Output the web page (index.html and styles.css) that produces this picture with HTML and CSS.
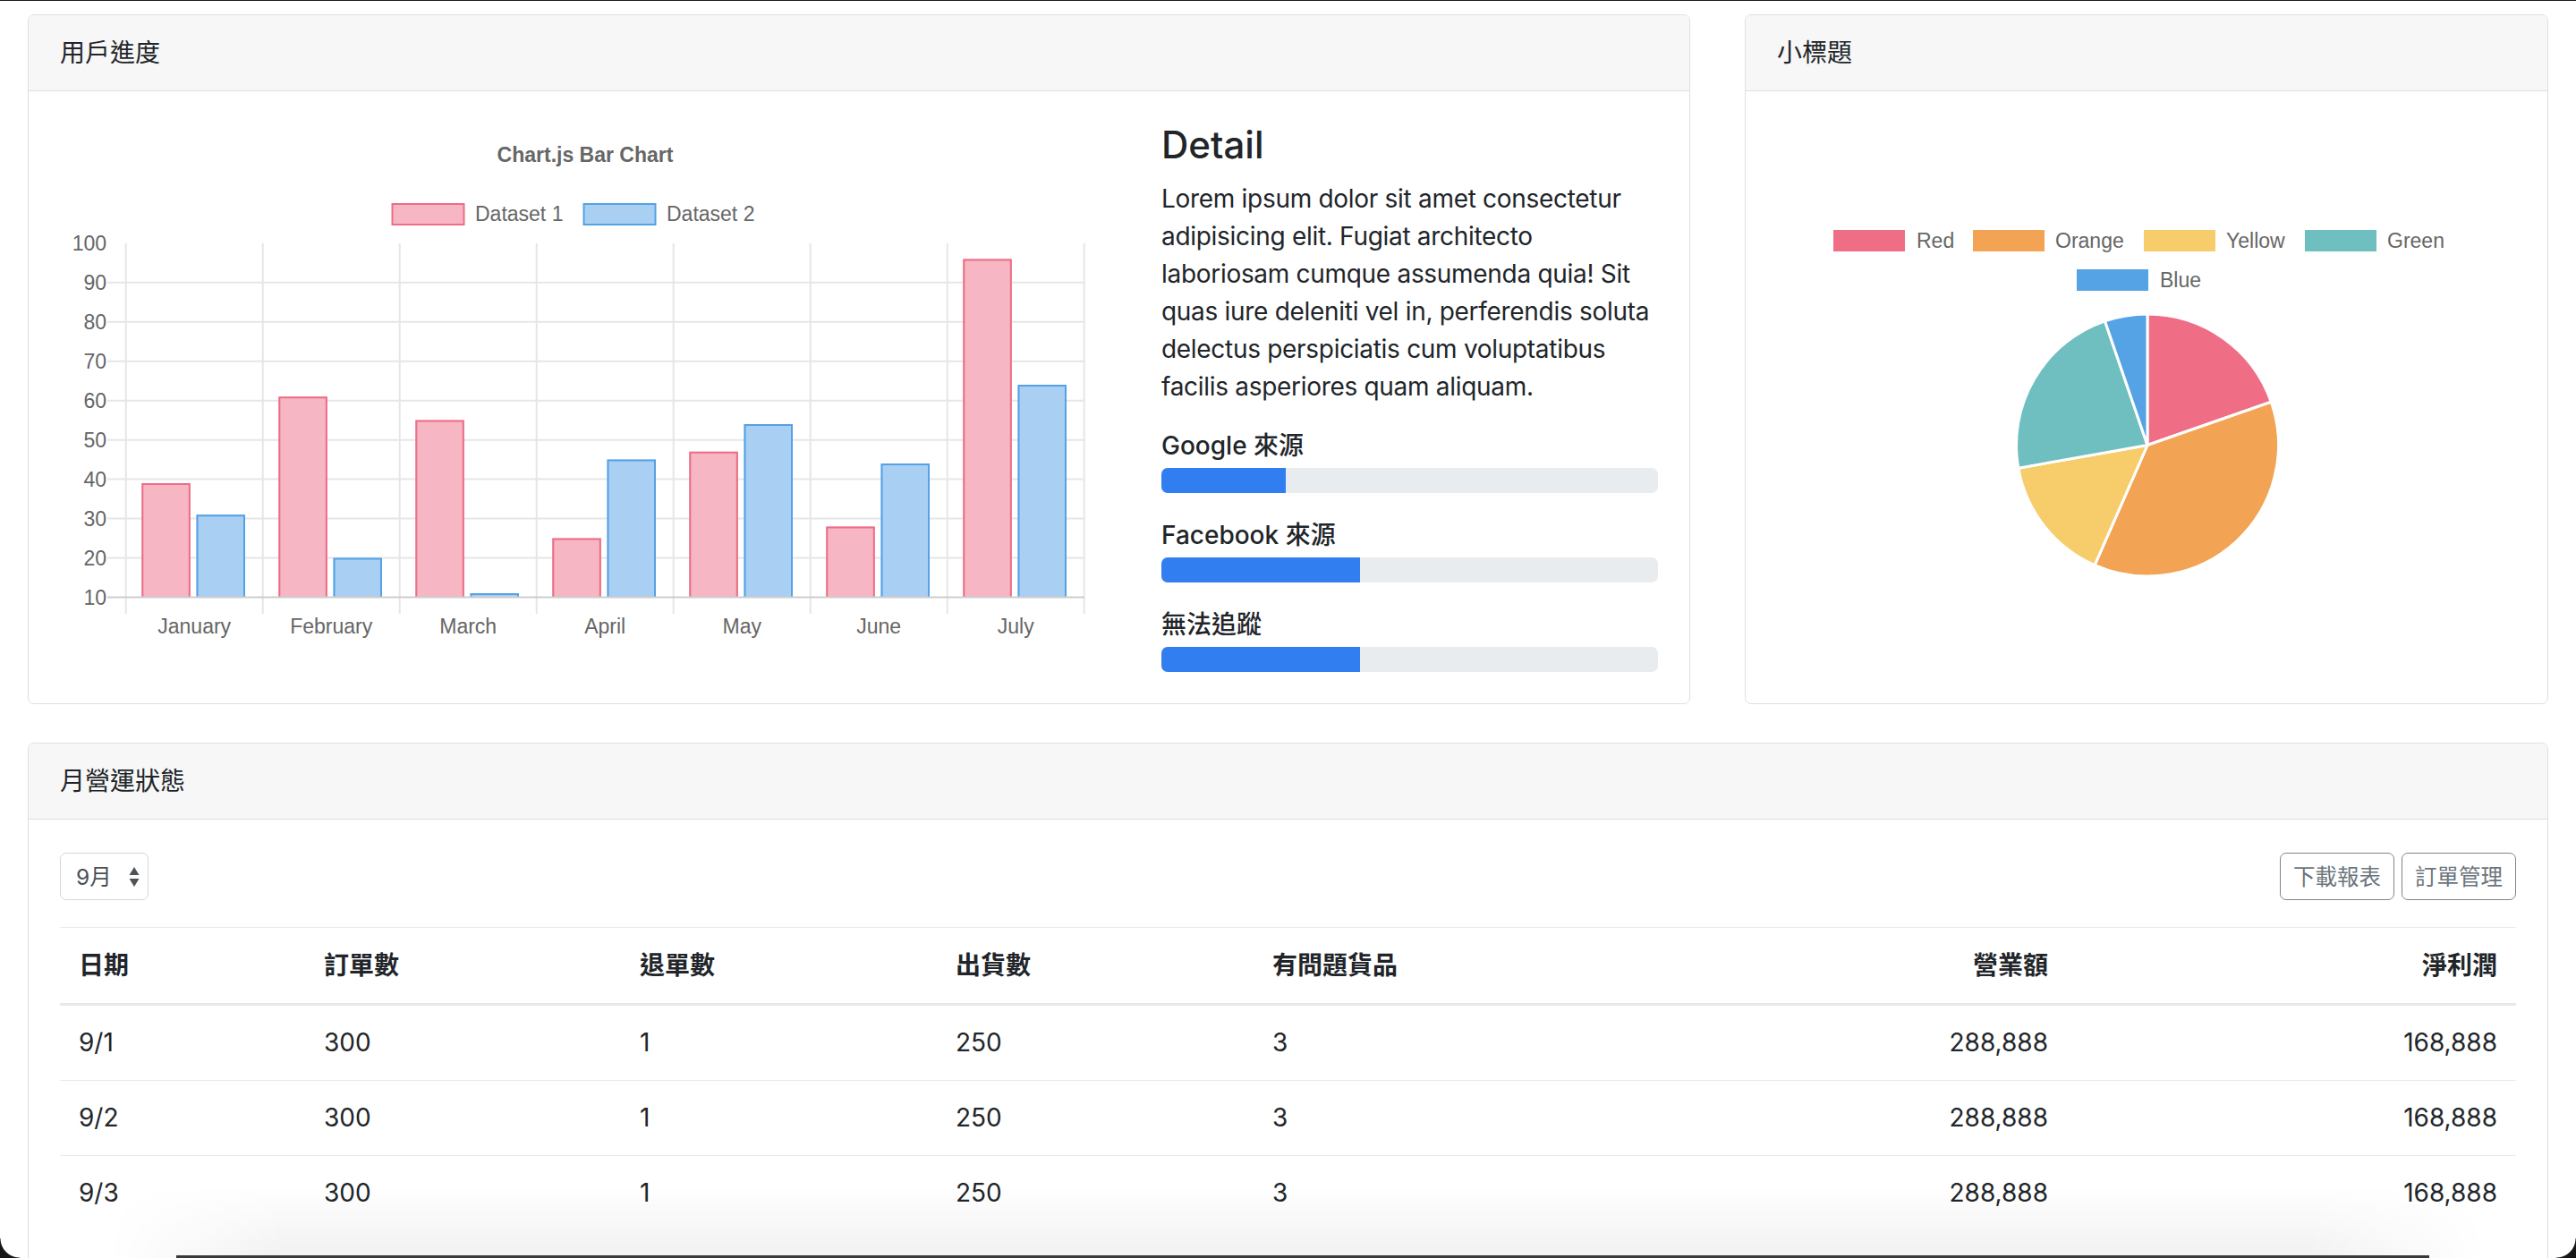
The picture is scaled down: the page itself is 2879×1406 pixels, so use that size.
FILE: index.html
```html
<!DOCTYPE html>
<html lang="zh-Hant">
<head>
<meta charset="utf-8">
<title>Dashboard</title>
<link rel="stylesheet" href="styles.css">
</head>
<body>
<div class="page">
  <div class="row-top">
    <section class="card">
      <div class="card-header">用戶進度</div>
      <div class="card-body body-split">
        <svg class="bar-chart" width="1180" height="614" viewBox="67 137 1180 614" xmlns="http://www.w3.org/2000/svg">
          <text class="chart-title" x="654" y="181" text-anchor="middle">Chart.js Bar Chart</text>
          <rect x="438.5" y="228" width="80" height="23" fill="#f7b6c3" stroke="#ec6d87" stroke-width="2"/>
          <text class="chart-text" x="531" y="247">Dataset 1</text>
          <rect x="652.5" y="228" width="80" height="23" fill="#a9cff3" stroke="#55a1e5" stroke-width="2"/>
          <text class="chart-text" x="745" y="247">Dataset 2</text>
          <g class="grid">
            <line x1="120" y1="315.8" x2="1212" y2="315.8"/>
            <line x1="120" y1="359.7" x2="1212" y2="359.7"/>
            <line x1="120" y1="403.7" x2="1212" y2="403.7"/>
            <line x1="120" y1="447.7" x2="1212" y2="447.7"/>
            <line x1="120" y1="491.7" x2="1212" y2="491.7"/>
            <line x1="120" y1="535.6" x2="1212" y2="535.6"/>
            <line x1="120" y1="579.6" x2="1212" y2="579.6"/>
            <line x1="120" y1="623.6" x2="1212" y2="623.6"/>
            <line x1="140.7" y1="272" x2="140.7" y2="686"/>
            <line x1="293.7" y1="272" x2="293.7" y2="686"/>
            <line x1="446.7" y1="272" x2="446.7" y2="686"/>
            <line x1="599.7" y1="272" x2="599.7" y2="686"/>
            <line x1="752.7" y1="272" x2="752.7" y2="686"/>
            <line x1="905.7" y1="272" x2="905.7" y2="686"/>
            <line x1="1058.7" y1="272" x2="1058.7" y2="686"/>
            <line x1="1211.7" y1="272" x2="1211.7" y2="686"/>
          </g>
          <g class="y-labels" text-anchor="end">
            <text x="119" y="280">100</text>
            <text x="119" y="324">90</text>
            <text x="119" y="368">80</text>
            <text x="119" y="412">70</text>
            <text x="119" y="456">60</text>
            <text x="119" y="500">50</text>
            <text x="119" y="544">40</text>
            <text x="119" y="588">30</text>
            <text x="119" y="632">20</text>
            <text x="119" y="676">10</text>
          </g>
          <g class="bars-a">
            <rect x="158.3" y="540.0" width="54.5" height="127.5"/>
            <rect x="311.3" y="443.3" width="54.5" height="224.2"/>
            <rect x="464.3" y="469.6" width="54.5" height="197.9"/>
            <rect x="617.3" y="601.5" width="54.5" height="66.0"/>
            <rect x="770.3" y="504.8" width="54.5" height="162.7"/>
            <rect x="923.3" y="588.4" width="54.5" height="79.1"/>
            <rect x="1076.3" y="289.4" width="54.5" height="378.1"/>
          </g>
          <g class="bars-a-line">
            <path d="M159.3 667.5V541H211.8V667.5"/>
            <path d="M312.3 667.5V444.3H364.8V667.5"/>
            <path d="M465.3 667.5V470.6H517.8V667.5"/>
            <path d="M618.3 667.5V602.5H670.8V667.5"/>
            <path d="M771.3 667.5V505.8H823.8V667.5"/>
            <path d="M924.3 667.5V589.4H976.8V667.5"/>
            <path d="M1077.3 667.5V290.4H1129.8V667.5"/>
          </g>
          <g class="bars-b">
            <rect x="219.5" y="575.2" width="54.5" height="92.3"/>
            <rect x="372.5" y="623.5" width="54.5" height="44.0"/>
            <rect x="525.5" y="663.1" width="54.5" height="4.4"/>
            <rect x="678.5" y="513.6" width="54.5" height="153.9"/>
            <rect x="831.5" y="474.0" width="54.5" height="193.5"/>
            <rect x="984.5" y="518.0" width="54.5" height="149.5"/>
            <rect x="1137.5" y="430.1" width="54.5" height="237.4"/>
          </g>
          <g class="bars-b-line">
            <path d="M220.5 667.5V576.2H273V667.5"/>
            <path d="M373.5 667.5V624.5H426V667.5"/>
            <path d="M526.5 667.5V664.1H579V667.5"/>
            <path d="M679.5 667.5V514.6H732V667.5"/>
            <path d="M832.5 667.5V475H885V667.5"/>
            <path d="M985.5 667.5V519H1038V667.5"/>
            <path d="M1138.5 667.5V431.1H1191V667.5"/>
          </g>
          <line class="axis" x1="120" y1="667.5" x2="1212" y2="667.5"/>
          <g class="x-labels" text-anchor="middle">
            <text x="217.2" y="708">January</text>
            <text x="370.2" y="708">February</text>
            <text x="523.2" y="708">March</text>
            <text x="676.2" y="708">April</text>
            <text x="829.2" y="708">May</text>
            <text x="982.2" y="708">June</text>
            <text x="1135.2" y="708">July</text>
          </g>
        </svg>
        <div class="detail">
          <h4 class="detail-title">Detail</h4>
          <p class="detail-text">Lorem ipsum dolor sit amet consectetur adipisicing elit. Fugiat architecto laboriosam cumque assumenda quia! Sit quas iure deleniti vel in, perferendis soluta delectus perspiciatis cum voluptatibus facilis asperiores quam aliquam.</p>
          <div class="source">
            <div class="source-label">Google 來源</div>
            <div class="progress"><div class="progress-fill" style="width:25%"></div></div>
          </div>
          <div class="source">
            <div class="source-label">Facebook 來源</div>
            <div class="progress"><div class="progress-fill" style="width:40%"></div></div>
          </div>
          <div class="source">
            <div class="source-label">無法追蹤</div>
            <div class="progress"><div class="progress-fill" style="width:40%"></div></div>
          </div>
        </div>
      </div>
    </section>
    <section class="card">
      <div class="card-header">小標題</div>
      <div class="card-body">
        <svg class="pie-chart" width="825" height="614" viewBox="1987 137 825 614" xmlns="http://www.w3.org/2000/svg">
          <rect x="2050" y="257" width="80" height="24" fill="#ef6e85"/>
          <text class="chart-text" x="2143" y="277">Red</text>
          <rect x="2206" y="257" width="80" height="24" fill="#f2a354"/>
          <text class="chart-text" x="2298" y="277">Orange</text>
          <rect x="2397" y="257" width="80" height="24" fill="#f7cd6b"/>
          <text class="chart-text" x="2489" y="277">Yellow</text>
          <rect x="2577" y="257" width="80" height="24" fill="#6fbfc0"/>
          <text class="chart-text" x="2669" y="277">Green</text>
          <rect x="2322" y="301" width="80" height="24" fill="#55a2e5"/>
          <text class="chart-text" x="2415" y="321">Blue</text>
          <g class="pie">
            <path fill="#ef6e85" d="M2401 497.5L2401 351A146.5 146.5 0 0 1 2539.3 449.25Z"/>
            <path fill="#f2a354" d="M2401 497.5L2539.3 449.25A146.5 146.5 0 0 1 2342.1 631.65Z"/>
            <path fill="#f7cd6b" d="M2401 497.5L2342.1 631.65A146.5 146.5 0 0 1 2256.8 523.2Z"/>
            <path fill="#6fbfc0" d="M2401 497.5L2256.8 523.2A146.5 146.5 0 0 1 2353.55 358.9Z"/>
            <path fill="#55a2e5" d="M2401 497.5L2353.55 358.9A146.5 146.5 0 0 1 2401 351Z"/>
          </g>
        </svg>
      </div>
    </section>
  </div>

  <section class="card">
    <div class="card-header">月營運狀態</div>
    <div class="card-body table-body">
      <div class="toolbar">
        <div class="month-select">
          <span>9月</span>
          <svg class="select-arrows" width="12" height="24" viewBox="0 0 12 24" xmlns="http://www.w3.org/2000/svg">
            <path d="M6 1L11.5 10H0.5Z"/>
            <path d="M6 23L11.5 14H0.5Z"/>
          </svg>
        </div>
        <div class="actions">
          <button class="btn-outline" type="button">下載報表</button>
          <button class="btn-outline" type="button">訂單管理</button>
        </div>
      </div>
      <table class="report">
        <colgroup>
          <col class="c1"><col class="c2"><col class="c3"><col class="c4"><col class="c5"><col class="c6"><col class="c7">
        </colgroup>
        <thead>
          <tr><th>日期</th><th>訂單數</th><th>退單數</th><th>出貨數</th><th>有問題貨品</th><th class="num">營業額</th><th class="num">淨利潤</th></tr>
        </thead>
        <tbody>
          <tr><td>9/1</td><td>300</td><td>1</td><td>250</td><td>3</td><td class="num">288,888</td><td class="num">168,888</td></tr>
          <tr><td>9/2</td><td>300</td><td>1</td><td>250</td><td>3</td><td class="num">288,888</td><td class="num">168,888</td></tr>
          <tr><td>9/3</td><td>300</td><td>1</td><td>250</td><td>3</td><td class="num">288,888</td><td class="num">168,888</td></tr>
        </tbody>
      </table>
    </div>
  </section>
</div>
<div class="screen-shadow"></div>
<div class="screen-edge"></div>
<div class="corner corner-left"></div>
<div class="corner corner-right"></div>
</body>
</html>
```

FILE: styles.css
```css
* { box-sizing: border-box; }
html, body { margin: 0; height: 100%; }
body {
  font-family: Inter, "Noto Sans CJK TC", sans-serif;
  font-size: 28px;
  line-height: 42px;
  color: #212529;
  background: #fff;
  overflow: hidden;
  border-top: 1px solid #1c1c1c;
}
.page { padding: 15px 31px 0; }
.row-top {
  display: grid;
  grid-template-columns: 1858fr 898fr;
  column-gap: 61px;
  margin-bottom: 43px;
}
.card {
  border: 1px solid #dfdfdf;
  border-radius: 7px;
  background: #fff;
  display: flex;
  flex-direction: column;
}
.card-header {
  padding: 21px 35px;
  line-height: 42px;
  background: #f7f7f7;
  border-bottom: 1px solid #dfdfdf;
  border-radius: 6px 6px 0 0;
}
.card-body { padding: 35px; flex: 1; }
.body-split { display: flex; gap: 51px; }
.bar-chart, .pie-chart { display: block; flex: none; }

.chart-title { font: bold 23px "Liberation Sans", Arial, sans-serif; fill: #666; }
.chart-text, .y-labels text, .x-labels text { font: 23px "Liberation Sans", Arial, sans-serif; fill: #666; }
.grid line { stroke: #e6e6e6; stroke-width: 2; }
.axis { stroke: #cdcdcd; stroke-width: 2; }
.bars-a rect { fill: #f7b6c3; }
.bars-b rect { fill: #a9cff3; }
.bars-a-line path, .bars-b-line path { fill: none; stroke-width: 2; }
.bars-a-line path { stroke: #ec6d87; }
.bars-b-line path { stroke: #55a1e5; }
.pie path { stroke: #fff; stroke-width: 3; stroke-linejoin: round; }

.detail { width: 555px; flex: none; }
.detail-title {
  margin: 0 0 14px;
  font-size: 42px;
  line-height: 50px;
  font-weight: 500;
}
.detail-text { margin: 0 0 28px; letter-spacing: -0.3px; }
.source { margin-bottom: 30px; }
.source:last-child { margin-bottom: 0; }
.source-label { font-weight: 500; line-height: 34px; margin-bottom: 8px; }
.progress {
  height: 28px;
  background: #e9ecef;
  border-radius: 7px;
  overflow: hidden;
}
.progress-fill { height: 100%; background: #317ef0; }

.table-body { padding: 37px 35px 35px; }
.toolbar {
  display: flex;
  justify-content: space-between;
  align-items: center;
  margin-bottom: 30px;
}
.month-select {
  width: 99px;
  height: 53px;
  border: 1px solid #d4d7da;
  border-radius: 7px;
  display: flex;
  align-items: center;
  justify-content: space-between;
  padding: 0 9px 0 17px;
  font-size: 24.5px;
  color: #495057;
}
.select-arrows path { fill: #4d5358; }
.actions { display: flex; gap: 8px; }
.btn-outline {
  height: 53px;
  padding: 0 14px;
  border: 1px solid #7d858c;
  border-radius: 7px;
  background: #fff;
  color: #6c757d;
  font-family: Inter, "Noto Sans CJK TC", sans-serif;
  font-size: 24.5px;
  line-height: 36px;
}
.report {
  width: 100%;
  border-collapse: collapse;
  table-layout: fixed;
}
.c1 { width: 274px; }
.c2 { width: 353px; }
.c3 { width: 353px; }
.c4 { width: 354px; }
.c5 { width: 454px; }
.c6 { width: 455px; }
.c7 { width: 502px; }
.report th, .report td {
  padding: 21px;
  line-height: 41px;
  text-align: left;
  border-top: 1px solid #e6e9ec;
}
.report th { font-weight: 700; border-bottom: 3.5px solid #e6e9ec; line-height: 42px; }
.report .num { text-align: right; }

.screen-shadow {
  position: fixed;
  left: 120px;
  right: 100px;
  bottom: 0;
  height: 80px;
  background: linear-gradient(to bottom, rgba(0,0,0,0), rgba(0,0,0,0.055));
  -webkit-mask-image: linear-gradient(to right, transparent, #000 200px, #000 calc(100% - 200px), transparent);
  mask-image: linear-gradient(to right, transparent, #000 200px, #000 calc(100% - 200px), transparent);
  pointer-events: none;
}
.screen-edge {
  position: fixed;
  left: 197px;
  right: 164px;
  bottom: 0;
  height: 3px;
  background: #3a3a3a;
}
.corner {
  position: fixed;
  bottom: 0;
  width: 22px;
  height: 22px;
}
.corner-left { left: 0; background: radial-gradient(circle at 100% 0, transparent 21px, #161616 22px); }
.corner-right { right: 0; background: radial-gradient(circle at 0 0, transparent 21px, #161616 22px); }
```
